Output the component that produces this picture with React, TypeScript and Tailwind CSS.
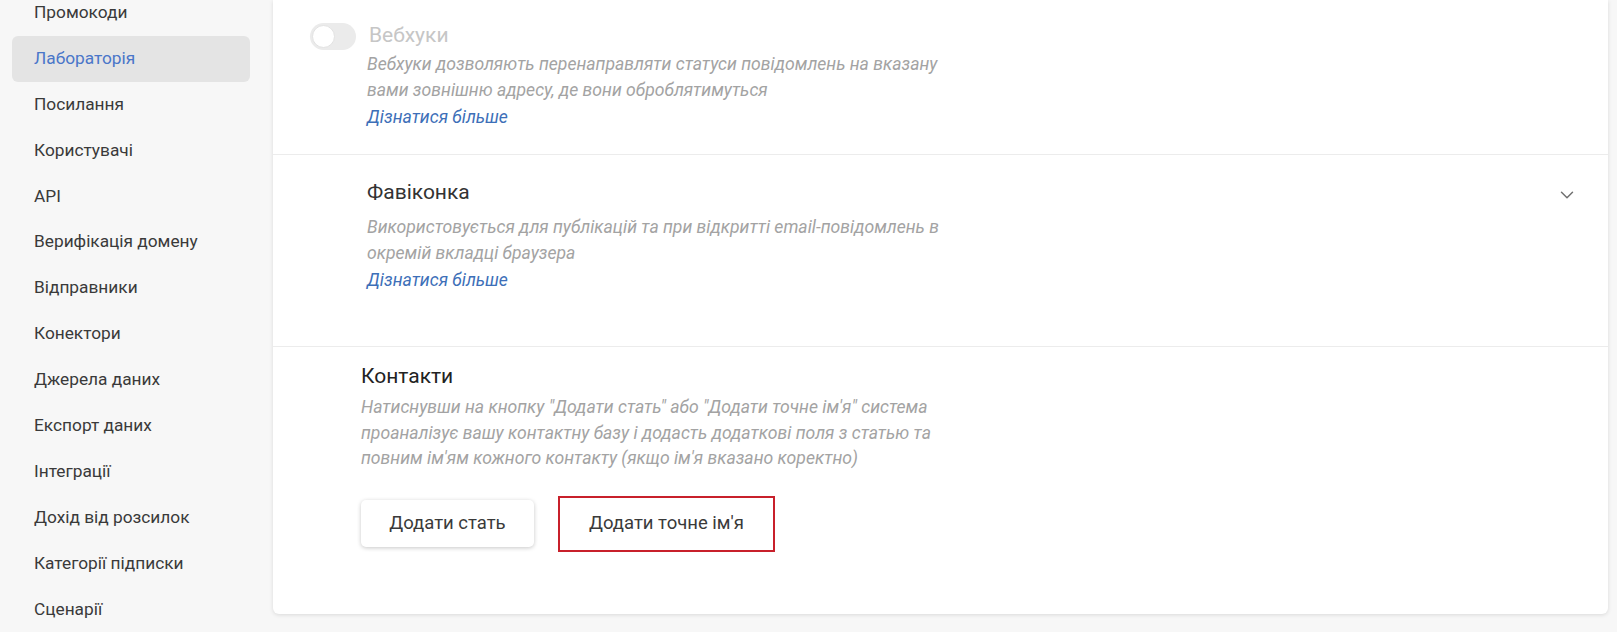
import { ChevronDown } from "lucide-react";

const navItems = [
  "Промокоди",
  "Лабораторія",
  "Посилання",
  "Користувачі",
  "API",
  "Верифікація домену",
  "Відправники",
  "Конектори",
  "Джерела даних",
  "Експорт даних",
  "Інтеграції",
  "Дохід від розсилок",
  "Категорії підписки",
  "Сценарії",
];

const ACTIVE = "Лабораторія";

// lines are broken by hand so the wrap matches the design
function Lines({ lines }: { lines: string[] }) {
  return (
    <>
      {lines.map((l, i) => (
        <span key={i} className="block whitespace-nowrap">
          {l}
        </span>
      ))}
    </>
  );
}

export default function App() {
  return (
    <div className="flex h-[632px] w-full overflow-hidden bg-[#f7f7f7] font-['Roboto',sans-serif] text-[#333]">
      {/* Sidebar */}
      <aside className="w-[262px] shrink-0 px-3">
        <ul className="-mt-[10px]">
          {navItems.map((item) => (
            <li
              key={item}
              className={`flex h-[45.9px] items-center rounded-md pl-[22px] text-[17.3px] ${
                item === ACTIVE ? "bg-[#e4e4e4] text-[#4a76c9]" : "text-[#3a3a3a]"
              }`}
            >
              {item}
            </li>
          ))}
        </ul>
      </aside>

      {/* Main */}
      <main className="flex-1 pl-[11px] pr-[9px]">
        <div className="h-[614px] rounded-b-[6px] bg-white shadow-[0_1px_4px_rgba(0,0,0,0.12)]">
          {/* Webhooks */}
          <section className="border-b border-[#ececec] pl-[37px] pt-[22px] pb-[24px]">
            <div className="flex h-7 items-center gap-[13px]">
              <div className="flex h-[27px] w-[46px] items-center rounded-full bg-[#ebebeb] p-[2px]">
                <div className="h-[23px] w-[23px] rounded-full border border-[#e2e2e2] bg-white" />
              </div>
              <span className="text-[21px] text-[#c6c6c6]">Вебхуки</span>
            </div>
            <div className="pl-[57px]">
              <p className="mt-[1px] text-[17.6px] italic leading-[26px] text-[#a3a3a3]">
                <Lines
                  lines={[
                    "Вебхуки дозволяють перенаправляти статуси повідомлень на вказану",
                    "вами зовнішню адресу, де вони оброблятимуться",
                  ]}
                />
              </p>
              <a className="mt-[1px] block text-[17.6px] italic leading-[26px] text-[#3d6fb8]">
                Дізнатися більше
              </a>
            </div>
          </section>

          {/* Favicon */}
          <section className="flex items-start justify-between border-b border-[#ececec] pl-[94px] pr-[30px] pt-[23px] pb-[53px]">
            <div>
              <h3 className="text-[21px] leading-7 text-[#333]">Фавіконка</h3>
              <p className="mt-[8px] text-[17.6px] italic leading-[26px] text-[#a3a3a3]">
                <Lines
                  lines={[
                    "Використовується для публікацій та при відкритті email-повідомлень в",
                    "окремій вкладці браузера",
                  ]}
                />
              </p>
              <a className="mt-[1px] block text-[17.6px] italic leading-[26px] text-[#3d6fb8]">
                Дізнатися більше
              </a>
            </div>
            <ChevronDown size={22} strokeWidth={1.6} className="mt-[6px] text-[#707070]" />
          </section>

          {/* Contacts */}
          <section className="pl-[88px] pt-[15px]">
            <h3 className="text-[21px] leading-7 text-[#222]">Контакти</h3>
            <p className="mt-[5px] text-[17.6px] italic leading-[25.5px] text-[#a3a3a3]">
              <Lines
                lines={[
                  "Натиснувши на кнопку \"Додати стать\" або \"Додати точне ім'я\" система",
                  "проаналізує вашу контактну базу і додасть додаткові поля з статью та",
                  "повним ім'ям кожного контакту (якщо ім'я вказано коректно)",
                ]}
              />
            </p>
            <div className="mt-[24px] flex items-center gap-6">
              <button className="h-[47px] w-[173px] rounded-[5px] bg-white text-[18.5px] text-[#3a3a3a] shadow-[0_1px_4px_rgba(0,0,0,0.22)]">
                Додати стать
              </button>
              <button className="h-[56px] w-[217px] border-[2px] border-[#c8202b] bg-white text-[18.5px] text-[#3a3a3a]">
                Додати точне ім'я
              </button>
            </div>
          </section>
        </div>
      </main>
    </div>
  );
}
